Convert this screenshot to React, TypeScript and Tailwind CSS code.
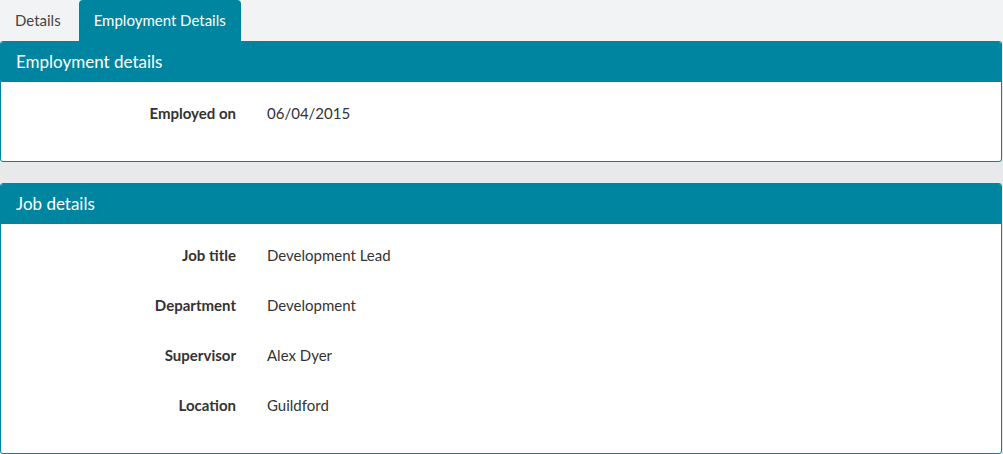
import React from 'react';

const font = { fontFamily: 'Lato, "Open Sans", sans-serif' };

function Row({ label, value }: { label: string; value: string }) {
  return (
    <div className="flex items-center h-[50px]">
      <div className="w-[235px] text-right font-bold text-[15px] text-[#333]">{label}</div>
      <div className="ml-[31px] text-[15px] text-[#333]">{value}</div>
    </div>
  );
}

function Panel({ title, children, className = '' }: { title: string; children: React.ReactNode; className?: string }) {
  return (
    <div className={`border border-[#0085a1] rounded-[3px] bg-white overflow-hidden ${className}`}>
      <div className="h-[40px] bg-[#0085a1] text-white text-[17px] flex items-center px-[15px] pb-[1px]">{title}</div>
      {children}
    </div>
  );
}

export default function App() {
  return (
    <div className="w-[1003px] h-[454px] bg-[#e8e9eb] overflow-hidden" style={font}>
      <div className="flex h-[41px] bg-[#f2f3f5] gap-[3px]">
        <div className="px-[15px] flex items-center text-[15px] text-[#444]">Details</div>
        <div className="px-[15px] flex items-center text-[15px] text-white bg-[#0085a1] rounded-t-[4px]">Employment Details</div>
      </div>
      <div className="w-[1002px]">
        <Panel title="Employment details" className="h-[121px]">
          <div className="pt-[6px]">
            <Row label="Employed on" value="06/04/2015" />
          </div>
        </Panel>
        <Panel title="Job details" className="mt-[21px] h-[271px]">
          <div className="pt-[6px]">
            <Row label="Job title" value="Development Lead" />
            <Row label="Department" value="Development" />
            <Row label="Supervisor" value="Alex Dyer" />
            <Row label="Location" value="Guildford" />
          </div>
        </Panel>
      </div>
    </div>
  );
}
